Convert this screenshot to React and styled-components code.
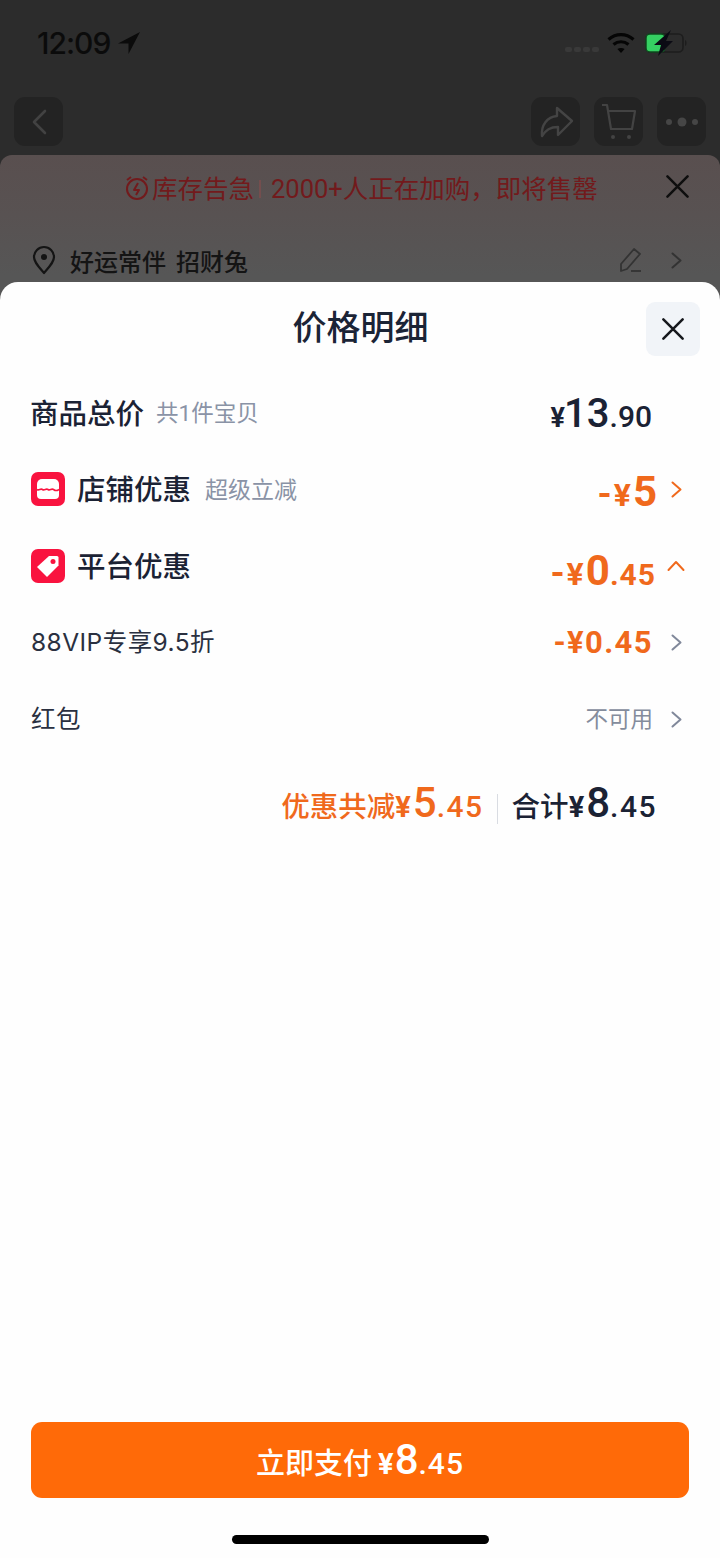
import React from "react";
import styled, { createGlobalStyle } from "styled-components";

const Global = createGlobalStyle`
  html, body { margin: 0; padding: 0; background: #2c2c2c; }
  * { box-sizing: border-box; }
`;
const CJK = `Roboto, "Noto Sans CJK SC", sans-serif`;

const Screen = styled.div`
  position: relative; width: 720px; height: 1558px; overflow: hidden;
  background: #2c2c2c; font-family: ${CJK}; display: flex; flex-direction: column;
`;
const StatusBar = styled.div`
  height: 97px; padding: 27px 32px 0 37px; display: flex; align-items: flex-start; justify-content: space-between; color: #0b0b0b;
`;
const Time = styled.div`
  display: flex; align-items: center; gap: 8px; font-size: 30px; line-height: 32px; font-weight: 500; font-family: Inter, sans-serif; letter-spacing: -1px;
`;
const StatusIcons = styled.div`display: flex; align-items: center; gap: 8px; height: 32px;`;
const Signal = styled.div`display: flex; gap: 2px; padding-top: 12px;`;
const SignalDot = styled.span`width: 7px; height: 5px; border-radius: 2px; background: #393939;`;
const NavBar = styled.div`
  height: 58px; padding: 0 14px; display: flex; gap: 14px;
`;
const NavButton = styled.div`
  width: 49px; height: 49px; border-radius: 11px; background: #232323; display: flex; align-items: center; justify-content: center;
`;
const Spacer = styled.div`flex: 1;`;
const BackSheet = styled.div`
  flex: 1; border-radius: 12px 12px 0 0; background: linear-gradient(#594f4f 0, #585252 60px, #565656 120px);
  display: flex; flex-direction: column;
`;
const AlertBar = styled.div`
  position: relative; height: 66px; display: flex; align-items: center; padding: 0 0 4px 125px; color: #721a1c; font-size: 25.500px;
`;
const AlertDivider = styled.span`width: 2px; height: 18px; background: #744e4e; margin: 6px 10px 0 5px;`;
const AlertClose = styled.div`margin-left: auto; margin-right: 31px; display: flex;`;
const AddressRow = styled.div`
  height: 50px; margin-top: 16px; padding: 0 38px 4px 32px; display: flex; align-items: center; color: #141414; font-size: 24px; font-weight: 500; word-spacing: 4px;
`;
const AddressText = styled.span`margin-left: 14px; flex: 1;`;
const Modal = styled.div`
  position: absolute; left: 0; right: 0; top: 282px; bottom: 0; background: #fefefe; border-radius: 18px 18px 0 0;
  display: flex; flex-direction: column; padding: 0 31px;
`;
const Header = styled.div`
  height: 93px; position: relative; display: flex; justify-content: center; padding-top: 24px;
`;
const Title = styled.div`font-size: 34px; line-height: 44px; font-weight: 500; color: #1b2436; margin-left: 1px;`;
const CloseButton = styled.div`
  position: absolute; right: -11px; top: 20px; width: 54px; height: 54px; border-radius: 9px; background: #f1f4f8; display: flex; align-items: center; justify-content: center;
`;
const Row = styled.div`
  height: 76.5px; display: flex; align-items: center;
`;
const RowIcon = styled.div`
  width: 34px; height: 34px; border-radius: 7px; background: #f9133f; margin: -1px 13px 0 0; display: flex; align-items: center; justify-content: center;
`;
const RowTitle = styled.span`font-size: 28.500px; font-weight: 500; color: #1b2234; margin: 0 0 4px -1px;`;
const RowNote = styled.span`font-size: ${p => p.$s || 22.5}px; color: #8a93a6; margin: 0 0 4px ${p => p.$ml || 12}px;`;
const RowPlain = styled.span`font-size: 24.500px; letter-spacing: 0.45px; color: #2a3040; margin-bottom: 4px; font-family: Inter, "Noto Sans CJK SC", sans-serif;`;
const Right = styled.div`margin-left: auto; display: flex; align-items: center; padding-right: ${p => p.$pr || 0}px;`;
const Amount = styled.span`
  display: inline-flex; align-items: baseline; font-weight: 500; color: ${p => p.$c || "#1b2234"};
  margin-top: ${p => p.$mt || 0}px;
`;
const Sm = styled.span`font-size: ${p => p.$s}px; font-weight: ${p => p.$w || 500}; letter-spacing: ${p => p.$ls || 0}px;`;
const Chevron = styled.div`width: ${p => p.$w}px; display: flex; justify-content: flex-end; padding-right: ${p => p.$pr ?? 7}px;`;
const Muted = styled.span`font-size: 22.500px; color: #848c9c; margin-bottom: 4px;`;
const Summary = styled.div`
  margin-top: 20px; height: 56px; padding-right: 32px; display: flex; align-items: baseline; justify-content: flex-end;
`;
const Divider = styled.span`align-self: center; width: 1px; height: 30px; background: #d9dce2; margin: 6px 14px 0 13px;`;
const SumLabel = styled.span`font-size: 28.500px; font-weight: 500; color: ${p => p.$c};`;
const Grow = styled.div`flex: 1;`;
const PayButton = styled.div`
  height: 76px; border-radius: 11px; background: #ff6a08; color: #fff; display: flex; align-items: baseline; justify-content: center;
  padding-top: 13px; font-weight: 500;
`;
const PayLabel = styled.span`font-size: 29px; margin-right: 6px;`;
const HomeBar = styled.div`
  width: 257px; height: 9px; border-radius: 5px; background: #000; align-self: center; margin: 37px 0 14px;
`;

const X = ({ size = 24, color = "#111", w = 2.4 }) => (
  <svg width={size} height={size} viewBox="0 0 24 24" fill="none" stroke={color} strokeWidth={w} strokeLinecap="round"><path d="M1.500 1.500 22.500 22.500M22.500 1.500 1.500 22.500" /></svg>
);
const ChevR = ({ color = "#80889a" }) => (
  <svg width="11" height="17" viewBox="0 0 11 17" fill="none" stroke={color} strokeWidth="2" strokeLinecap="round" strokeLinejoin="round"><path d="M1.500 1.500l8 7-8 7" /></svg>
);
const ChevU = () => (
  <svg width="18" height="12" viewBox="0 0 18 12" fill="none" stroke="#f0691c" strokeWidth="2" strokeLinecap="round" strokeLinejoin="round"><path d="M1.500 10l7.500-8 7.500 8" /></svg>
);

export default function App() {
  return (
    <Screen>
      <Global />
      <StatusBar>
        <Time>
          12:09
          <svg width="22" height="22" viewBox="0 0 22 22"><path d="M22 0 0 11.500h10.500V22z" fill="#0b0b0b" /></svg>
        </Time>
        <StatusIcons>
          <Signal><SignalDot /><SignalDot /><SignalDot /><SignalDot /></Signal>
          <svg width="28" height="22" viewBox="0 0 28 22" fill="none" stroke="#050505" strokeWidth="3.200" strokeLinecap="butt">
            <path d="M1.500 7.500C9 1 19 1 26.500 7.500" />
            <path d="M6.500 12.500C11 8.800 17 8.800 21.500 12.500" />
            <path d="M14 21 10.400 17C12.400 15.600 15.600 15.600 17.600 17z" fill="#050505" stroke="none" />
          </svg>
          <svg width="43" height="26" viewBox="0 0 43 26" style={{ marginLeft: 2 }}>
            <rect x="1" y="4" width="37" height="18" rx="4.500" fill="none" stroke="#1d1d1d" strokeWidth="1.600" />
            <path d="M40 10c2 .5 2 5.500 0 6z" fill="#1d1d1d" />
            <rect x="1" y="4" width="19" height="18" rx="4" fill="#35d062" stroke="#0f4a1f" strokeWidth="1.500" />
            <path d="M26 0 9 15h7l-3 11 15-15h-7z" fill="#0b0b14" />
          </svg>
        </StatusIcons>
      </StatusBar>
      <NavBar>
        <NavButton>
          <svg width="16" height="26" viewBox="0 0 16 26" fill="none" stroke="#424242" strokeWidth="2.600" strokeLinecap="round" strokeLinejoin="round"><path d="M14 2 3 13l11 11" /></svg>
        </NavButton>
        <Spacer />
        <NavButton>
          <svg width="38" height="38" viewBox="0 0 38 38" fill="none" stroke="#444" strokeWidth="2.400" strokeLinejoin="round"><path d="M20 5l15 13-14 14v-8C13 24 9 27 5 33c-1-11 5-19 15-20z" /></svg>
        </NavButton>
        <NavButton>
          <svg width="38" height="40" viewBox="0 0 38 40" fill="none" stroke="#434343" strokeWidth="2.200" strokeLinejoin="round"><path d="M2 3h5l4 24h21l3-18H8" /><circle cx="13" cy="35" r="2" fill="#434343" stroke="none" /><circle cx="29" cy="35" r="2" fill="#434343" stroke="none" /></svg>
        </NavButton>
        <NavButton>
          <svg width="34" height="12" viewBox="0 0 34 12" fill="#464646"><circle cx="4" cy="6" r="3" /><circle cx="17" cy="6" r="4.500" /><circle cx="30" cy="6" r="3" /></svg>
        </NavButton>
      </NavBar>
      <BackSheet>
        <AlertBar>
          <svg width="24" height="26" viewBox="0 0 24 26" fill="none" stroke="#721a1c" strokeWidth="2" style={{ margin: "3px 3px 0 0", flex: "none" }}><circle cx="12" cy="14" r="10" /><path d="M2 5l4-3M22 5l-4-3" /><path d="M13 8l-4 7h5l-3 5" strokeLinejoin="round" /></svg>
          库存告急
          <AlertDivider />
          2000+人正在加购，即将售罄
          <AlertClose><X size={23} color="#0e0e0e" w={2.600} /></AlertClose>
        </AlertBar>
        <AddressRow>
          <svg width="24" height="30" viewBox="0 0 24 30" fill="none" stroke="#141414" strokeWidth="2.200"><path d="M12 28C6 21 2 17 2 12a10 10 0 0 1 20 0c0 5-4 9-10 16z" strokeLinejoin="round" /><circle cx="12" cy="12" r="3" fill="#141414" stroke="none" /></svg>
          <AddressText>好运常伴 招财兔</AddressText>
          <svg width="24" height="26" viewBox="0 0 24 26" fill="none" stroke="#333" strokeWidth="1.800" strokeLinejoin="round" style={{ marginRight: 28 }}><path d="M15 2l6 5L8 22l-6 2 0-7z" /><path d="M12 24h10" /></svg>
          <ChevR color="#333" />
        </AddressRow>
      </BackSheet>
      <Modal>
        <Header>
          <Title>价格明细</Title>
          <CloseButton><X size={22} color="#15171c" w={2.700} /></CloseButton>
        </Header>
        <Row>
          <RowTitle>商品总价</RowTitle>
          <RowNote>共1件宝贝</RowNote>
          <Right $pr={37}>
            <Amount><Sm $s={27} $w={700} $ls={-1}>¥</Sm><Sm $s={40}>13</Sm><Sm $s={30}>.90</Sm></Amount>
          </Right>
        </Row>
        <Row>
          <RowIcon>
            <svg width="22" height="20" viewBox="0 0 22 20"><path d="M5 0h12a5 5 0 0 1 5 5v11a4 4 0 0 1-4 4H4a4 4 0 0 1-4-4V5a5 5 0 0 1 5-5z" fill="#fff" /><path d="M0 10.500c2 1.500 3.500-1.500 5.500 0s3.500-1.500 5.500 0 3.500-1.500 5.500 0 3.500 1.500 5.500 0" fill="none" stroke="#f9133f" strokeWidth="1.600" /></svg>
          </RowIcon>
          <RowTitle>店铺优惠</RowTitle>
          <RowNote $ml={14} $s={23}>超级立减</RowNote>
          <Right>
            <Amount $c="#f0691c" $mt={4}><Sm $s={36} $w={700} $ls={2}>-</Sm><Sm $s={32} $w={700} $ls={2}>¥</Sm><Sm $s={42} $w={700}>5</Sm></Amount>
            <Chevron $w={32}><ChevR color="#f0691c" /></Chevron>
          </Right>
        </Row>
        <Row>
          <RowIcon>
            <svg width="24" height="24" viewBox="0 0 24 24"><path d="M13 2h8a1.500 1.500 0 0 1 1.500 1.500v8L11 23 1 13z" fill="#fff" /><circle cx="17" cy="7.500" r="2.500" fill="#f9133f" /></svg>
          </RowIcon>
          <RowTitle>平台优惠</RowTitle>
          <Right>
            <Amount $c="#f0691c" $mt={8}><Sm $s={36} $w={700} $ls={2}>-</Sm><Sm $s={32} $w={700} $ls={2}>¥</Sm><Sm $s={42} $w={700}>0</Sm><Sm $s={30} $w={700} $ls={1}>.45</Sm></Amount>
            <Chevron $w={33} $pr={4}><ChevU /></Chevron>
          </Right>
        </Row>
        <Row>
          <RowPlain>88VIP专享9.5折</RowPlain>
          <Right>
            <Amount $c="#f0691c"><Sm $s={31} $w={700} $ls={1.400}>-¥0.45</Sm></Amount>
            <Chevron $w={36}><ChevR /></Chevron>
          </Right>
        </Row>
        <Row>
          <RowPlain>红包</RowPlain>
          <Right>
            <Muted>不可用</Muted>
            <Chevron $w={36}><ChevR /></Chevron>
          </Right>
        </Row>
        <Summary>
          <SumLabel $c="#f0691c">优惠共减</SumLabel>
          <Amount $c="#f0691c"><Sm $s={29} $w={700} $ls={2}>¥</Sm><Sm $s={42}>5</Sm><Sm $s={30} $ls={1.500}>.45</Sm></Amount>
          <Divider />
          <SumLabel $c="#1b2234">合计</SumLabel>
          <Amount><Sm $s={29} $w={700} $ls={2}>¥</Sm><Sm $s={42}>8</Sm><Sm $s={30} $ls={1.500}>.45</Sm></Amount>
        </Summary>
        <Grow />
        <PayButton>
          <PayLabel>立即支付</PayLabel>
          <Sm $s={29} $w={700} $ls={1}>¥</Sm><Sm $s={42}>8</Sm><Sm $s={30} $ls={1}>.45</Sm>
        </PayButton>
        <HomeBar />
      </Modal>
    </Screen>
  );
}
